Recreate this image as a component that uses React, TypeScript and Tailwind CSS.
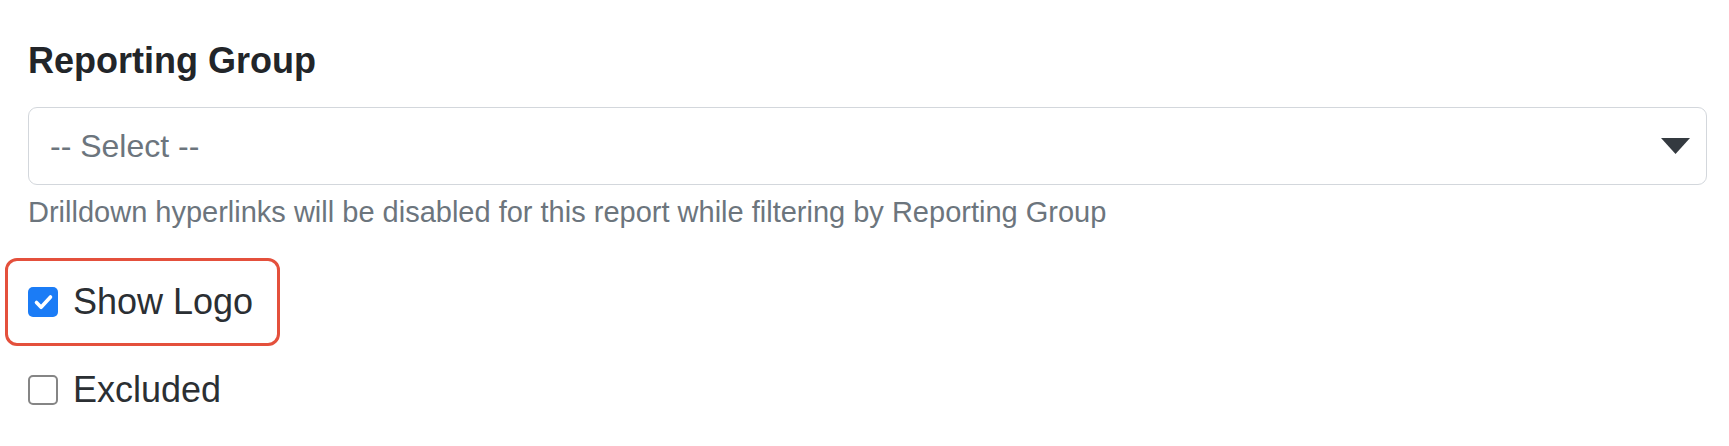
import { useState } from 'react'

// ─── Checkbox row ────────────────────────────────────────────────
interface CheckRowProps {
  label: string
  checked: boolean
  onToggle: () => void
}

function CheckRow({ label, checked, onToggle }: CheckRowProps) {
  return (
    <label className="inline-flex items-center gap-[15px] cursor-pointer select-none">
      <span
        onClick={onToggle}
        className={
          checked
            ? 'w-[30px] h-[30px] rounded-[5px] bg-[#1b7cf6] flex items-center justify-center'
            : 'w-[30px] h-[30px] rounded-[5px] border-2 border-[#858585] bg-white'
        }
      >
        {checked && (
          <svg width="30" height="30" viewBox="0 0 30 30" fill="none">
            <path d="M8.5 15.5l4.6 4.8L22.5 10" stroke="#fff" strokeWidth="3.6" strokeLinecap="round" strokeLinejoin="round" />
          </svg>
        )}
      </span>
      <span className="text-[36px] leading-[44px] text-[#2b2f33]">{label}</span>
    </label>
  )
}

// ─── Main ────────────────────────────────────────────────────────
export default function App() {
  const [showLogo, setShowLogo] = useState(true)
  const [excluded, setExcluded] = useState(false)

  return (
    <div className="min-h-screen bg-white pl-[28px] pr-[22px] pt-[41px] font-['Liberation_Sans',Arial,sans-serif]">
      <h2 className="text-[36px] leading-[40px] font-bold text-[#222529]">Reporting Group</h2>

      {/* ─── Select ───────────────────────────────────────── */}
      <div className="mt-[26px] h-[78px] flex items-center justify-between border border-[#d3d7dc] rounded-[9px] pl-[21px] pr-[16px] bg-white">
        <span className="text-[32px] leading-[40px] text-[#6c757d]">-- Select --</span>
        <svg width="29" height="16" viewBox="0 0 29 16">
          <path d="M0 0h29L14.5 16z" fill="#343a40" />
        </svg>
      </div>
      <p className="mt-[11px] text-[29px] leading-[32px] text-[#6c757d]">
        Drilldown hyperlinks will be disabled for this report while filtering by Reporting Group
      </p>

      {/* ─── Options ──────────────────────────────────────── */}
      <div className="mt-[52px] flex flex-col items-start gap-[44px]">
        <div className="relative">
          <span className="absolute -left-[23px] -top-[22px] w-[275px] h-[88px] border-[3px] border-[#e4503c] rounded-[12px] pointer-events-none" />
          <CheckRow label="Show Logo" checked={showLogo} onToggle={() => setShowLogo(!showLogo)} />
        </div>
        <CheckRow label="Excluded" checked={excluded} onToggle={() => setExcluded(!excluded)} />
      </div>
    </div>
  )
}
